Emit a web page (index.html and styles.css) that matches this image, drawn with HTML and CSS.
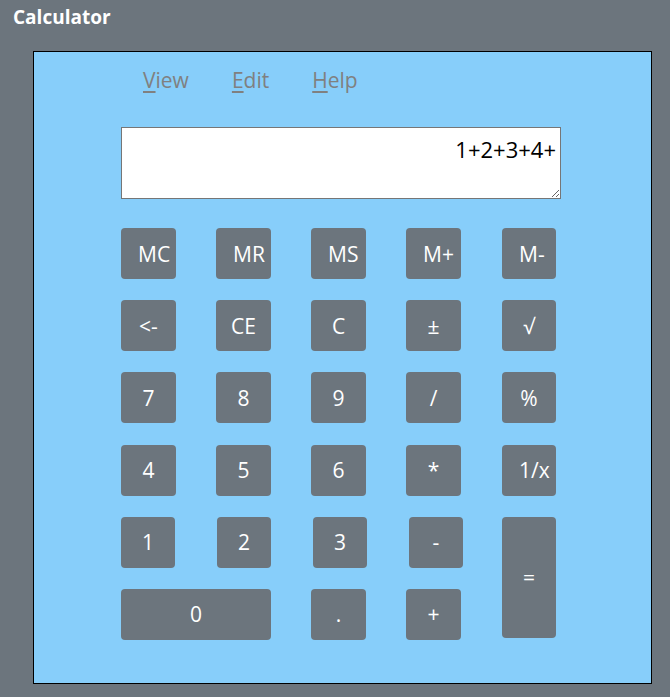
FILE: index.html
```html
<!DOCTYPE html>
<html lang="en">
<head>
<meta charset="utf-8">
<title>Calculator</title>
<link rel="stylesheet" href="styles.css">
</head>
<body>
<h1 class="title">Calculator</h1>
<div class="panel">
  <nav class="menu">
    <span class="menu-item"><u>V</u>iew</span>
    <span class="menu-item"><u>E</u>dit</span>
    <span class="menu-item"><u>H</u>elp</span>
  </nav>
  <textarea class="display" readonly>1+2+3+4+</textarea>
  <div class="keys">
    <button class="key key-left">MC</button>
    <button class="key key-left">MR</button>
    <button class="key key-left">MS</button>
    <button class="key key-left">M+</button>
    <button class="key key-left">M-</button>

    <button class="key">&lt;-</button>
    <button class="key">CE</button>
    <button class="key">C</button>
    <button class="key">±</button>
    <button class="key">√</button>

    <button class="key">7</button>
    <button class="key">8</button>
    <button class="key">9</button>
    <button class="key">/</button>
    <button class="key">%</button>

    <button class="key">4</button>
    <button class="key">5</button>
    <button class="key">6</button>
    <button class="key">*</button>
    <button class="key key-left">1/x</button>

    <button class="key key-narrow">1</button>
    <button class="key key-narrow shift-1">2</button>
    <button class="key key-narrow shift-2">3</button>
    <button class="key key-narrow shift-3">-</button>
    <button class="key key-equals">=</button>

    <button class="key key-zero">0</button>
    <button class="key">.</button>
    <button class="key">+</button>
  </div>
</div>
</body>
</html>
```

FILE: styles.css
```css
html, body {
  margin: 0;
  padding: 0;
}

body {
  background: #6c757d;
  width: 670px;
  height: 697px;
  overflow: hidden;
  font-family: "Open Sans", "Noto Sans", sans-serif;
}

.title {
  margin: 0;
  padding: 4px 0 0 13px;
  height: 51px;
  box-sizing: border-box;
  font-size: 19px;
  font-weight: 700;
  color: #ffffff;
  line-height: 26px;
}

.panel {
  margin-left: 33px;
  width: 619px;
  height: 633px;
  box-sizing: border-box;
  border: 1px solid #000;
  background: #87cefa;
  padding: 0 0 0 87px;
}

.menu {
  display: flex;
  gap: 43px;
  padding: 14px 0 0 22px;
  height: 75px;
  box-sizing: border-box;
}

.menu-item {
  font-size: 21px;
  line-height: 28px;
  color: #808080;
}

.menu-item u {
  text-decoration-thickness: 2px;
  text-underline-offset: 3px;
}

.display {
  display: block;
  width: 440px;
  height: 72px;
  box-sizing: border-box;
  margin: 0;
  border: 1px solid #767676;
  background: #fff;
  padding: 6px 4px 4px;
  font-family: "Open Sans", "Noto Sans", sans-serif;
  font-size: 22px;
  line-height: 30px;
  text-align: right;
  color: #000;
  resize: both;
  outline: none;
}

.keys {
  margin-top: 29px;
  display: grid;
  grid-template-columns: repeat(5, 55px);
  grid-auto-rows: 51px;
  column-gap: 40px;
  row-gap: 21.2px;
}

.key {
  border: none;
  border-radius: 4px;
  background: #6c757d;
  color: #fff;
  font-family: "Open Sans", "Noto Sans", sans-serif;
  font-size: 21px;
  padding: 0 4px;
  margin: 0;
  text-align: center;
  white-space: nowrap;
  overflow: hidden;
}

.key-left {
  text-align: left;
  padding-left: 17px;
}

.key:nth-child(5n) {
  margin-left: 1px;
  width: 54px;
}

.key-narrow {
  width: 54px;
}

.shift-1 { margin-left: 1px; }
.shift-2 { margin-left: 2px; }
.shift-3 { margin-left: 3px; }

.key-equals {
  grid-row: span 2;
  height: 121px;
  width: 54px;
}

.key-zero {
  grid-column: span 2;
  width: 150px;
}
```
